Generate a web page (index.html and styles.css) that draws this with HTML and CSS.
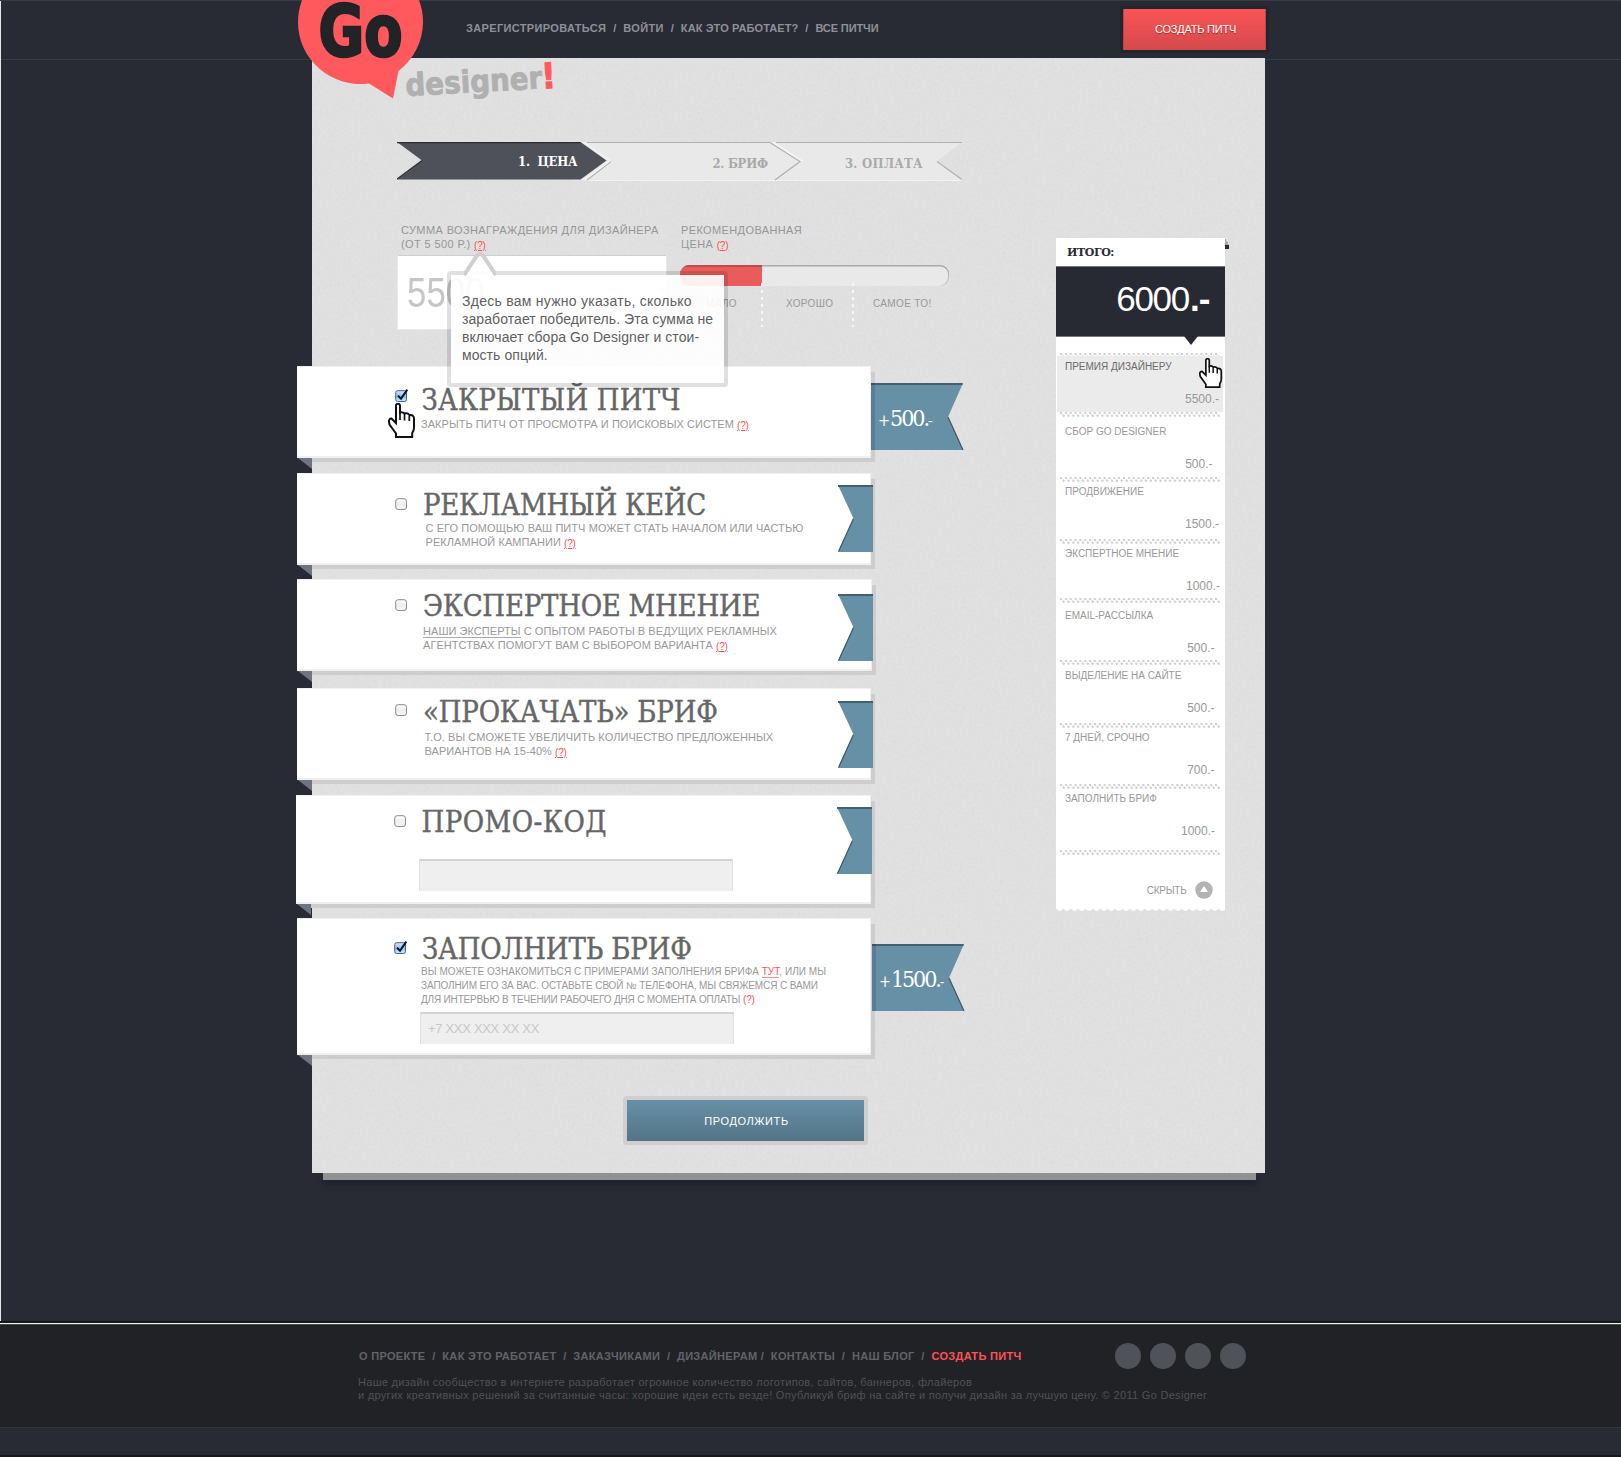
FILE: index.html
```html
<!DOCTYPE html>
<html lang="ru">
<head>
<meta charset="utf-8">
<title>Go Designer</title>
<link rel="stylesheet" href="styles.css">
</head>
<body>
<svg class="defs" width="0" height="0" aria-hidden="true">
  <defs>
    <g id="hand">
      <path d="M8 2.500Q8 .8 10 .8T12 2.500V9.500Q14.500 8.500 16.500 10.500Q19.500 9.500 21.500 12Q26 11.500 26 16V25Q26 27 24.200 30V34H8V30.500L1.500 21.500Q-.2 15.500 3.500 15.500L8 20Z" fill="#fff" stroke="#111" stroke-width="2"/>
      <path d="M12 9V17M16.500 11V17.500M21.300 12.500V18" fill="none" stroke="#111" stroke-width="1.700"/>
    </g>
    <linearGradient id="box-off" x1="0" y1="0" x2="0" y2="1"><stop offset="0" stop-color="#fff"/><stop offset=".5" stop-color="#eee"/><stop offset="1" stop-color="#f8f8f8"/></linearGradient>
    <linearGradient id="box-on" x1="0" y1="0" x2="0" y2="1"><stop offset="0" stop-color="#d8e9fb"/><stop offset=".5" stop-color="#8fbdee"/><stop offset="1" stop-color="#c5f0ff"/></linearGradient>
    <g id="check-off"><rect x=".7" y="1.700" width="10.800" height="10.800" rx="2.500" fill="url(#box-off)" stroke="#8c8c8c"/></g>
    <g id="check-on"><rect x=".7" y="1.700" width="10.800" height="10.800" rx="2" fill="url(#box-on)" stroke="#4a5f95"/><path d="M3 6.800L6 9.800L12.300 .6" fill="none" stroke="#0c1226" stroke-width="2"/></g>
    <g id="flag-in">
      <path d="M0 0H35V67H0L15.500 33.500Z" fill="#6690a6"/>
      <path d="M0 1H35" stroke="#44606f" stroke-width="2"/>
      <path d="M15.500 33.500L.5 66.500" stroke="#3d5764" stroke-width="1.200"/>
    </g>
    <g id="flag-out">
      <path d="M0 0H92L77 34L92 67H0Z" fill="#6690a6"/>
      <path d="M0 1H91.500" stroke="#44606f" stroke-width="2"/>
      <path d="M77 34L92 67" stroke="#3d5764" stroke-width="1.200"/>
      <path d="M0 0H4V67H0Z" fill="#000" opacity=".12"/>
    </g>
  </defs>
</svg>

<div class="shell">
  <header class="header">
    <nav class="top-nav"><a>ЗАРЕГИСТРИРОВАТЬСЯ</a><i>/</i><a>ВОЙТИ</a><i>/</i><a class="nav-how">КАК ЭТО РАБОТАЕТ?</a><i>/</i><a class="nav-all">ВСЕ ПИТЧИ</a></nav>
    <a class="create">СОЗДАТЬ ПИТЧ</a>
    <svg class="logo" width="270" height="104" viewBox="0 0 270 104">
      <path d="M0 22a62.500 62 0 0 1 125 0a62.500 62 0 0 1-24.500 49L95 98.500L71 83.500A62.500 62 0 0 1 0 22Z" fill="#ff595e"/>
      <text class="logo-go" x="20.500" y="56" textLength="84" lengthAdjust="spacingAndGlyphs">Go</text>
      <g transform="rotate(-3.200 108 96)">
        <text class="logo-designer" x="108" y="96" textLength="137" lengthAdjust="spacingAndGlyphs">designer</text>
        <text class="logo-mark" x="244.500" y="96" textLength="14" lengthAdjust="spacingAndGlyphs">!</text>
      </g>
    </svg>
  </header>

  <main class="paper">
    <svg class="grain" width="100%" height="100%" aria-hidden="true">
      <filter id="noise"><feTurbulence type="fractalNoise" baseFrequency=".35" numOctaves="2" seed="4"/><feColorMatrix values="0 0 0 0 .5  0 0 0 0 .5  0 0 0 0 .5  .9 0 0 0 -.35"/></filter>
      <rect width="100%" height="100%" filter="url(#noise)" opacity=".26"/>
    </svg>
    <div class="column">
      <svg class="steps" width="568" height="41" viewBox="0 0 568 41">
        <path d="M176 0H565L540 19.500L565 38.500H176Z" fill="#e9e9e9"/>
        <path d="M190 .5H373M379 .5H565" stroke="#b0b0b0"/>
        <path d="M190 38.500H565" stroke="#f3f3f3"/>
        <path d="M540 19.500L565 37.500M373 .5L403 19.500L378 38M214 19.500L190 38" fill="none" stroke="#b0b0b0" stroke-width="1.200"/>
        <path d="M375.500 0L406 19.500" stroke="#f5f5f5" stroke-width="1.500"/>
        <path d="M186 0L213 18.500L187 38" fill="none" stroke="#f2f2f2" stroke-width="2"/>
        <path d="M0 0H183.500L209.500 18.500L183.500 37.500H0L25 18.500Z" fill="#4f5159"/>
        <path d="M0 .7H183.500M25 18.500L0 37" stroke="#2c2d32" stroke-width="1.200"/>
        <text class="step step-on" x="121" y="24.300" textLength="59.500">1. &#160;ЦЕНА</text>
        <text class="step" x="315.500" y="26.300" textLength="55.500">2. БРИФ</text>
        <text class="step" x="448" y="26.300" textLength="77.500">3. ОПЛАТА</text>
      </svg>

      <section class="price-form">
        <div class="amount">
          <p class="label">СУММА ВОЗНАГРАЖДЕНИЯ ДЛЯ ДИЗАЙНЕРА<br>(ОТ 5 500 Р.) <a class="help">(?)</a></p>
          <div class="amount-input"><span class="amount-value">5500</span></div>
          <div class="tooltip">
            <svg class="tip-arrow" width="32" height="24" viewBox="0 0 32 24"><path d="M0 23L13 3.500Q16 .5 19 3.500L32 23" fill="#fff" fill-opacity=".9" stroke="#cfcfcf" stroke-width="4"/></svg>
            <span class="tip-a">Здесь вам нужно указать, сколько</span><br><span class="tip-b">заработает победитель. Эта сумма не</span><br><span class="tip-b">включает сбора Go Designer и стои-</span><br><span class="tip-b">мость опций.</span>
          </div>
        </div>
        <div class="advice">
          <p class="label">РЕКОМЕНДОВАННАЯ<br>ЦЕНА <a class="help">(?)</a></p>
          <div class="bar"><div class="bar-fill"></div></div>
          <div class="scale"><span class="mark mark-low">МАЛО</span><span class="mark mark-mid">ХОРОШО</span><span class="mark mark-top">САМОЕ ТО!</span></div>
        </div>
      </section>

      <section class="options">
        <article class="card card-private">
          <svg class="check" width="14" height="14"><use href="#check-on"/></svg>
          <div class="text"><h2 class="title">ЗАКРЫТЫЙ ПИТЧ</h2>
            <p class="desc">ЗАКРЫТЬ ПИТЧ ОТ ПРОСМОТРА И ПОИСКОВЫХ СИСТЕМ <a class="help">(?)</a></p></div>
          <svg class="ribbon" width="93" height="68"><use href="#flag-out"/><text x="7" y="43"><tspan class="plus">+</tspan><tspan class="sum sum-short" x="19">500.</tspan><tspan class="minus">-</tspan></text></svg>
          <svg class="hand" width="28" height="36"><use href="#hand"/></svg>
        </article>
        <article class="card card-case">
          <svg class="check" width="14" height="14"><use href="#check-off"/></svg>
          <div class="text"><h2 class="title">РЕКЛАМНЫЙ КЕЙС</h2>
            <p class="desc">С ЕГО ПОМОЩЬЮ ВАШ ПИТЧ МОЖЕТ СТАТЬ НАЧАЛОМ ИЛИ ЧАСТЬЮ<br>РЕКЛАМНОЙ КАМПАНИИ <a class="help">(?)</a></p></div>
          <svg class="flag" width="35" height="67"><use href="#flag-in"/></svg>
        </article>
        <article class="card card-expert">
          <svg class="check" width="14" height="14"><use href="#check-off"/></svg>
          <div class="text"><h2 class="title">ЭКСПЕРТНОЕ МНЕНИЕ</h2>
            <p class="desc"><a class="inline-link">НАШИ ЭКСПЕРТЫ</a> С ОПЫТОМ РАБОТЫ В ВЕДУЩИХ РЕКЛАМНЫХ<br>АГЕНТСТВАХ ПОМОГУТ ВАМ С ВЫБОРОМ ВАРИАНТА <a class="help">(?)</a></p></div>
          <svg class="flag" width="35" height="67"><use href="#flag-in"/></svg>
        </article>
        <article class="card card-boost">
          <svg class="check" width="14" height="14"><use href="#check-off"/></svg>
          <div class="text"><h2 class="title">«ПРОКАЧАТЬ» БРИФ</h2>
            <p class="desc">Т.О. ВЫ СМОЖЕТЕ УВЕЛИЧИТЬ КОЛИЧЕСТВО ПРЕДЛОЖЕННЫХ<br>ВАРИАНТОВ НА 15-40% <a class="help">(?)</a></p></div>
          <svg class="flag" width="35" height="67"><use href="#flag-in"/></svg>
        </article>
        <article class="card card-promo">
          <svg class="check" width="14" height="14"><use href="#check-off"/></svg>
          <div class="text"><h2 class="title">ПРОМО-КОД</h2>
            <div class="field"></div></div>
          <svg class="flag" width="35" height="67"><use href="#flag-in"/></svg>
        </article>
        <article class="card card-brief">
          <svg class="check" width="14" height="14"><use href="#check-on"/></svg>
          <div class="text"><h2 class="title">ЗАПОЛНИТЬ БРИФ</h2>
            <p class="desc small"><span class="line-a">ВЫ МОЖЕТЕ ОЗНАКОМИТЬСЯ С ПРИМЕРАМИ ЗАПОЛНЕНИЯ БРИФА <a class="red-link">ТУТ</a>, ИЛИ МЫ</span><br><span class="line-b">ЗАПОЛНИМ ЕГО ЗА ВАС. ОСТАВЬТЕ СВОЙ № ТЕЛЕФОНА, МЫ СВЯЖЕМСЯ С ВАМИ</span><br><span class="line-c">ДЛЯ ИНТЕРВЬЮ В ТЕЧЕНИИ РАБОЧЕГО ДНЯ С МОМЕНТА ОПЛАТЫ</span> <a class="help plain">(?)</a></p>
            <div class="field">+7 XXX XXX XX XX</div></div>
          <svg class="ribbon" width="93" height="68"><use href="#flag-out"/><text x="7" y="43.300"><tspan class="plus">+</tspan><tspan class="sum" x="19">1500.</tspan><tspan class="minus">-</tspan></text></svg>
        </article>
      </section>
      <a class="continue">ПРОДОЛЖИТЬ</a>
    </div>

    <aside class="total">
      <div class="tab"></div>
      <h3 class="total-title">ИТОГО:</h3>
      <div class="total-sum"><span class="digits">6000</span><b class="tail">.-</b></div>
      <div class="row row-start"></div>
      <div class="row row-prize"><span>ПРЕМИЯ ДИЗАЙНЕРУ</span><span class="value">5500.-</span><svg class="hand-small" width="24" height="31" viewBox="0 0 28 36"><use href="#hand"/></svg></div>
      <div class="row row-fee"><span>СБОР GO DESIGNER</span><span class="value">500.-</span></div>
      <div class="row row-promo"><span>ПРОДВИЖЕНИЕ</span><span class="value">1500.-</span></div>
      <div class="row row-expert"><span>ЭКСПЕРТНОЕ МНЕНИЕ</span><span class="value">1000.-</span></div>
      <div class="row row-mail"><span>EMAIL-РАССЫЛКА</span><span class="value">500.-</span></div>
      <div class="row row-mark"><span>ВЫДЕЛЕНИЕ НА САЙТЕ</span><span class="value">500.-</span></div>
      <div class="row row-days"><span>7 ДНЕЙ, СРОЧНО</span><span class="value">700.-</span></div>
      <div class="row row-brief"><span>ЗАПОЛНИТЬ БРИФ</span><span class="value">1000.-</span></div>
      <div class="hide"><span class="hide-text">СКРЫТЬ</span><svg width="18" height="18"><circle cx="9" cy="9" r="8.700" fill="#b3b3b3"/><path d="M9 5L13 11H5Z" fill="#fff"/></svg></div>
    </aside>
  </main>
  <div class="under"></div>
</div>

<footer class="footer">
  <div class="footer-text">
    <nav class="bottom-nav">О ПРОЕКТЕ  /  КАК ЭТО РАБОТАЕТ  /  ЗАКАЗЧИКАМИ  /  ДИЗАЙНЕРАМ /  КОНТАКТЫ  /  НАШ БЛОГ  /  <a class="accent">СОЗДАТЬ ПИТЧ</a></nav>
    <p class="about">Наше дизайн сообщество в интернете разработает огромное количество логотипов, сайтов, баннеров, флайеров<br>и других креативных решений за считанные часы: хорошие идеи есть везде! Опубликуй бриф на сайте и получи дизайн за лучшую цену. © 2011 Go Designer</p>
  </div>
  <div class="social"><i class="dot"></i><i class="dot"></i><i class="dot"></i><i class="dot"></i></div>
</footer>
<div class="floor"></div>
</body>
</html>
```

FILE: styles.css
```css
* { box-sizing: border-box; }
body { margin: 0; background: #282b34; font-family: "Liberation Sans", Arial, sans-serif; font-size: 11px; line-height: 14px; color: #999; overflow: hidden; }
h2, h3, p { margin: 0; font-weight: normal; }
.defs { position: absolute; }

.shell { height: 1323px; background: linear-gradient(#373b45, #373b45) 0 59px / 100% 1px no-repeat, #282b34; border-bottom: 2px solid #15171c; box-shadow: inset 1px 0 #e8e8e8; }

/* header */
.header { position: relative; display: flex; justify-content: space-between; align-items: flex-start; height: 58px; width: 954px; margin-left: 312px; padding: 9px 0 0 154px; }
.shell::before { content: ""; display: block; height: 1px; margin-bottom: -1px; background: #373b45; }
.top-nav { display: flex; padding-top: 12px; font-weight: bold; letter-spacing: .35px; white-space: pre; color: #8f9095; }
.top-nav i { width: 17px; text-align: center; font-style: normal; }
.nav-how { letter-spacing: .1px; }
.nav-all { letter-spacing: -.1px; }
.create { width: 143px; height: 41px; padding-left: 2px; line-height: 40px; text-align: center; letter-spacing: -.22px; color: #fff; background: linear-gradient(#fb5455, #d44a4b); box-shadow: 0 0 0 3px #23252d, inset 1px 0 #b9454a, inset -1px 0 #b9454a; text-shadow: 0 1px 1px #a03030; }
.logo { position: absolute; left: -14px; top: 0; z-index: 2; overflow: visible; }
.logo-go { font: bold 72px "DejaVu Sans Condensed", "DejaVu Sans", sans-serif; fill: #222326; stroke: #222326; stroke-width: 2.500px; }
.logo-designer { font: bold 31px "DejaVu Sans Condensed", "DejaVu Sans", sans-serif; fill: #b0b0b0; stroke: #b0b0b0; stroke-width: .8px; }
.logo-mark { font: bold 35px "DejaVu Sans Condensed", "DejaVu Sans", sans-serif; fill: #ff595e; stroke: #ff595e; stroke-width: 1.200px; }

/* paper */
.paper { position: relative; display: grid; grid-template-columns: 743.500px 169px; width: 953px; height: 1115px; margin-left: 312px; background: #e1e1e1; }
.grain { position: absolute; inset: 0; }
.column, .total { position: relative; }
.under { width: 933px; height: 7px; margin-left: 323px; background: #919191; box-shadow: 0 5px 5px #20222a; }

.steps { display: block; margin: 84px 0 0 85px; }
.step { font: bold 13px "DejaVu Serif Condensed", "DejaVu Serif", serif; fill: #aaa; }
.step-on { fill: #fff; }

/* price */
.price-form { display: flex; height: 143px; margin: 40px 0 0 86px; }
.amount { position: relative; width: 268px; }
.label { padding-left: 3px; letter-spacing: .39px; height: 33px; color: #969696; white-space: nowrap; }
.help { position: relative; top: .5px; font-size: 10px; letter-spacing: -.2px; color: #ff4f53; text-decoration: underline; text-decoration-thickness: 1px; text-underline-offset: 1px; }
.help.plain { top: 0; text-decoration: none; }
.amount-input { height: 73px; padding: 12px 0 0 9px; background: #fff; box-shadow: 0 -1px #cfcfcf, 0 0 0 1px #e9e9e9; font-size: 42px; line-height: 50px; color: #c6c6c6; }
.amount-value { display: inline-block; transform: scaleX(.83); transform-origin: 0 0; }
.tooltip { position: absolute; z-index: 3; left: 49px; top: 48px; width: 281px; height: 116px; padding: 17px 11px; border: 4px solid rgba(0,0,0,.12); border-radius: 4px; background: rgba(255,255,255,.91); background-clip: padding-box; font-size: 14px; line-height: 18px; color: #5f5f5f; white-space: nowrap; }
.tip-a { letter-spacing: .26px; }
.tip-b { letter-spacing: .07px; }
.tip-arrow { position: absolute; left: 13px; top: -23px; }
.advice { margin-left: 10px; width: 275px; padding-left: 2px; }
.advice .label { padding-left: 3px; letter-spacing: .38px; }
.bar { width: 269px; height: 21px; margin-top: 9px; margin-left: 2px; border-radius: 9px; background: #e9e9e9; box-shadow: inset 0 1.5px #aaa, inset -1px 0 #bbb; overflow: hidden; }
.bar-fill { width: 82px; height: 21px; background: #ea5c5c; box-shadow: inset 0 2px #b94c4c; }
.scale { display: flex; height: 44px; margin-top: -3px; margin-left: 1px; font-size: 10px; letter-spacing: .35px; }
.mark { padding-top: 14px; }
.mark-low { width: 82px; padding-left: 27px; }
.mark-mid { width: 91px; padding-left: 25px; }
.mark-top { padding-left: 21px; }
.mark-mid, .mark-top { background: repeating-linear-gradient(#f6f6f6 0 3px, transparent 3px 7px) 0 0 / 2px 100% no-repeat; }

/* option cards */
.options { margin: 0 0 0 -15px; }
.card { position: relative; display: flex; width: 574px; height: 92px; background: #fff; padding-left: 98px; border: 1px solid #f0f0f0; border-width: 1px 1px 2px 0; }
.card::before { content: ""; position: absolute; z-index: -1; left: 15px; right: -5px; top: 5px; bottom: -6px; background: #cdcdcd; }
.column { z-index: 0; }
.card::after { content: ""; position: absolute; left: 1px; top: calc(100% + 2px); width: 14px; height: 11px; background: #6f7580; clip-path: polygon(0 0, 100% 0, 100% 100%); }
.check { flex: none; margin-top: 22px; }
.text { margin-left: 12px; }
.title { height: 32px; font: 29px/32px "DejaVu Serif Condensed", "DejaVu Serif", serif; color: #666; -webkit-text-stroke: .4px #666; white-space: nowrap; }
.desc { letter-spacing: .05px; white-space: nowrap; color: #999; }
.desc.small { font-size: 10px; letter-spacing: .04px; }
.line-b { letter-spacing: -.11px; }
.line-c { letter-spacing: -.18px; }
.inline-link { border-bottom: 1px solid #aaa; }
.red-link { color: #ff4f53; border-bottom: 1px solid #ff8f90; }
.flag { position: absolute; right: -3px; }
.ribbon { position: absolute; left: calc(100% + 1px); }
.sum { font: 23px "DejaVu Serif Condensed", "DejaVu Serif", serif; letter-spacing: -2.100px; fill: #fff; }
.sum-short { letter-spacing: -2px; }
.plus { font: 16px "DejaVu Serif Condensed", "DejaVu Serif", serif; fill: #fff; }
.minus { font: 15px "DejaVu Serif Condensed", "DejaVu Serif", serif; fill: #fff; }
.hand { position: absolute; left: 91px; top: 36px; z-index: 2; }
.field { width: 314px; height: 32px; padding: 8px 7px; background: #efefef; border: solid #e0e0e0; border-width: 0 1px; box-shadow: inset 0 2px #d4d4d4; font-size: 13px; line-height: 17px; letter-spacing: -.31px; color: #c8c8c8; }

.card-private .text { padding-top: 17px; }
.card-private .title { letter-spacing: .2px; margin-left: .5px; }
.card-private .desc { padding-top: 1px; }
.card-private .ribbon { top: 16px; }
.card-case { margin-top: 15px; }
.card-case .check { margin-top: 23px; }
.card-case .text { padding-top: 15px; margin-left: 14px; }
.card-case .title { letter-spacing: -.25px; }
.card-case .desc { margin-left: 2.500px; letter-spacing: .07px; }
.card-case .flag { top: 11px; }
.card-expert { margin-top: 14px; width: 575px; }
.card-expert .check { margin-top: 18px; }
.card-expert .text { padding-top: 10px; margin-left: 14px; }
.card-expert .title { letter-spacing: -.25px; }
.card-expert .desc { padding-top: 2px; letter-spacing: .05px; }
.card-expert .flag { top: 14px; right: -2px; }
.card-boost { margin-top: 17px; }
.card-boost .check { margin-top: 14px; }
.card-boost .text { padding-top: 7px; margin-left: 14px; }
.card-boost .title { letter-spacing: -.2px; }
.card-boost .desc { padding-top: 2px; margin-left: 1.500px; letter-spacing: .06px; }
.card-boost .flag { top: 12px; }
.card-promo { height: 109px; margin: 15px 0 0 -1px; width: 575px; }
.card-promo .check { margin-top: 18px; }
.card-promo .text { padding-top: 10px; }
.card-promo .title { letter-spacing: .45px; margin-left: 1.500px; }
.card-promo .field { margin: 21px 0 0 -1px; }
.card-promo .flag { top: 11px; right: -2px; }
.card-brief { height: 137px; margin-top: 14px; }
.card-brief .check { margin: 22px 0 0 -1px; }
.card-brief .text { padding-top: 14px; margin-left: 14px; }
.card-brief .title { letter-spacing: -.15px; }
.card-brief .desc { margin-left: -1px; }
.card-brief .field { margin: 5px 0 0 -2px; }
.card-brief .ribbon { top: 25px; left: calc(100% + 2px); }

.continue { display: block; width: 245px; height: 49px; margin: 41px 0 0 311px; padding-left: 2px; border: 4px solid #cfcfcf; border-radius: 4px; background: linear-gradient(#6790a6, #547487); background-clip: padding-box; color: #fff; line-height: 42px; text-align: center; letter-spacing: .6px; }

/* total */
.total { display: flex; flex-direction: column; height: 674px; margin-top: 180px; background: radial-gradient(circle at 50% 0, #fff 3.500px, transparent 4px) 0 100% / 7.400px 5px repeat-x, linear-gradient(#fff, #fff) 0 0 / 100% calc(100% - 4px) no-repeat; font-size: 10px; line-height: 12px; }
.tab { position: absolute; left: 169px; top: 0; width: 4px; height: 11px; background: linear-gradient(#272a33, #272a33) 0 7px / 4px 4px no-repeat, linear-gradient(to top right, #aaa 50%, transparent 51%) 0 0 / 4px 7px no-repeat; }
.total-title { height: 28px; padding: 8px 0 0 11.500px; font: bold 11px/14px "DejaVu Serif", serif; letter-spacing: -.4px; color: #272a33; }
.total-sum { position: relative; display: flex; justify-content: flex-end; height: 71px; padding: 11.500px 15px 0 0; background: #272a33; color: #fff; font-size: 35px; line-height: 40px; letter-spacing: -1.300px; border: solid #777; border-width: 1px 0; }
.total-sum::after { content: ""; position: absolute; left: 128.500px; top: 69px; width: 14px; height: 9px; background: #272a33; clip-path: polygon(0 0, 100% 0, 50% 100%); }
.digits { padding-right: 1px; }
.tail { letter-spacing: -.9px; }
.row { position: relative; display: flex; flex-direction: column; gap: 20px; }
.row::after { content: ""; position: absolute; left: 4px; right: 5px; bottom: 0; height: 5px; background: radial-gradient(circle at 1.200px 1.200px, #d0d0d0 1px, transparent 1.400px) 0 0 / 4.850px 9px repeat-x, radial-gradient(circle at 3.600px 3.600px, #d0d0d0 1px, transparent 1.400px) 0 0 / 4.850px 9px repeat-x; }
.value { align-self: flex-end; font-size: 12px; line-height: 14px; margin-top: -1px; }
.row-start { height: 19px; }
.row-start::after { bottom: 0; height: 3px; }
.row-prize { height: 61px; padding: 5px 5.500px 0 9.500px; background: linear-gradient(#ebebeb, #ebebeb) 1px 0 / 166px 56px no-repeat; color: #6a6a6a; }
.row-prize .value { color: #999; }
.row-fee { height: 65px; padding: 9px 12px 0 9.500px; }
.row-promo { height: 62px; padding: 4px 5.500px 0 9.500px; }
.row-expert { height: 59px; padding: 4px 4.500px 0 9.500px; }
.row-mail { height: 62px; padding: 7px 10px 0 9.500px; }
.row-mark { height: 63px; padding: 5px 10px 0 9.500px; }
.row-days { height: 61px; padding: 4px 10px 0 9.500px; }
.row-brief { height: 66px; padding: 4px 9.500px 0 9.500px; }
.hand-small { position: absolute; left: 143.500px; top: 2px; }
.hide { display: flex; justify-content: flex-end; align-items: center; gap: 8px; margin-top: 26px; padding-right: 12px; }
.hide-text { letter-spacing: -.25px; padding-top: 2px; }

/* footer */
.footer { display: flex; height: 105px; padding: 32px 0 0 358px; background: #212225; border-top: 1px solid #f4f4f4; border-bottom: 1px solid #33363f; box-shadow: inset 0 1px #454649; }
.footer-text { width: 757.400px; }
.bottom-nav { margin-left: 1px; margin-top: -8px; padding-top: 1px; font-weight: bold; letter-spacing: .315px; white-space: pre; color: #62636a; }
.accent { color: #ff5255; }
.about { margin-top: 12.500px; line-height: 13px; letter-spacing: .3px; white-space: nowrap; color: #505155; }
.social { display: flex; gap: 9px; margin-top: -13.500px; }
.dot { width: 26px; height: 26px; border-radius: 50%; background: #50525a; }
.floor { height: 29px; background: #282b34; border-bottom: 2px solid #15171c; }
```
